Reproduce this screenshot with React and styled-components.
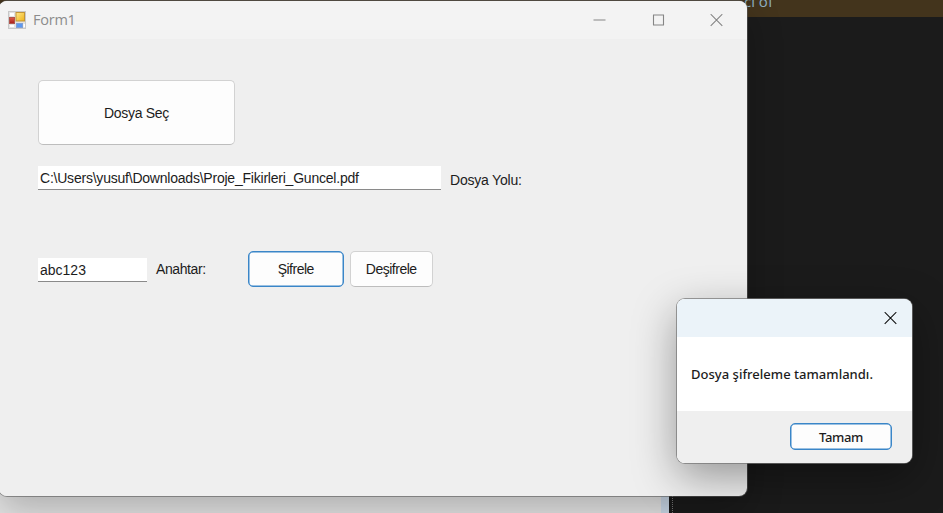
import React from "react";
import styled, { createGlobalStyle, css } from "styled-components";

const Global = createGlobalStyle`
  * { box-sizing: border-box; }
  body { margin: 0; overflow: hidden; background: #1b1b1b; }
`;

const Desktop = styled.main`
  position: relative;
  width: 943px;
  height: 513px;
  overflow: hidden;
  display: flex;
  flex-direction: column;
  justify-content: space-between;
  background: #1b1b1b;
  font-family: "Liberation Sans", Arial, sans-serif;
  color: #1c1c1c;
`;

const EditorLine = styled.div`
  height: 17px;
  padding-left: 744px;
  background: #43341c;
  color: #8fb0c0;
  font: 15px/17px "Open Sans", sans-serif;
  white-space: pre;
  span { display: block; margin-top: -7px; }
`;

const Backdrop = styled.div`
  display: flex;
  height: 30px;
`;

const Page = styled.div`
  width: 661px;
  background: #e4e4e4;
`;

const Scrollbar = styled.div`
  width: 8px;
  background: #cbd9e8;
`;

const Splitter = styled.div`
  margin-left: 3px;
  border-left: 1px dotted #777;
`;

const FormWindow = styled.section`
  position: absolute;
  left: -1px;
  top: 1px;
  width: 748px;
  height: 495px;
  display: flex;
  flex-direction: column;
  overflow: hidden;
  border-radius: 8px;
  background: #efefef;
`;

const FormShadow = styled.div`
  position: absolute;
  left: -1px;
  top: 1px;
  width: 748px;
  height: 495px;
  border-radius: 8px;
  box-shadow: 0 0 0 1px rgba(90, 90, 90, 0.6), 0 14px 36px rgba(0, 0, 0, 0.24);
`;

const TitleBar = styled.header`
  display: flex;
  align-items: center;
  height: 38px;
  padding: 0 24px 0 9px;
  background: #f3f3f3;
`;

const Title = styled.h1`
  flex: 1;
  margin: 0 0 0 7px;
  font: 400 14.5px/20px "Open Sans", sans-serif;
  letter-spacing: -0.25px;
  color: #8c8c8c;
`;

const Controls = styled.div`
  display: flex;
  gap: 45.5px;
  svg { display: block; }
`;

const Body = styled.div`
  display: flex;
  flex-direction: column;
  align-items: flex-start;
  padding: 41px 0 0 39px;
`;

const Row = styled.div`
  display: flex;
  align-items: flex-start;
  margin-top: ${(p) => p.$top}px;
`;

const Button = styled.button`
  width: ${(p) => p.$w}px;
  height: ${(p) => p.$h}px;
  margin: 0 0 0 ${(p) => p.$left || 0}px;
  padding: 0;
  border: 1px solid #d2d2d2;
  border-bottom-color: #bdbdbd;
  border-radius: 5px;
  background: #fdfdfd;
  font: 14px/18px "Liberation Sans", Arial, sans-serif;
  letter-spacing: ${(p) => p.$track || 0}px;
  color: #1c1c1c;
  ${(p) =>
    p.$focused &&
    css`
      border: 1px solid #3a86c8;
      box-shadow: inset 0 0 0 0.5px #3a86c8;
    `}
  ${(p) =>
    p.$dialog &&
    css`
      font-family: "Noto Sans", sans-serif;
      font-size: 13px;
      font-weight: 500;
    `}
`;

const Field = styled.input`
  width: ${(p) => p.$w}px;
  height: 24px;
  padding: 0 2px;
  border: 0;
  border-bottom: 1px solid #8a8a8a;
  outline: 0;
  background: #fff;
  font: 14px/20px "Liberation Sans", Arial, sans-serif;
  letter-spacing: ${(p) => p.$track}px;
  color: #1c1c1c;
`;

const Label = styled.label`
  margin: ${(p) => p.$top}px 0 0 9px;
  font-size: 14px;
  line-height: 18px;
  letter-spacing: ${(p) => p.$track}px;
`;

const Dialog = styled.section`
  position: absolute;
  left: 677px;
  top: 299px;
  width: 235px;
  height: 164px;
  display: flex;
  flex-direction: column;
  overflow: hidden;
  border-radius: 8px;
  background: #fff;
`;

const DialogShadow = styled.div`
  position: absolute;
  left: 677px;
  top: 299px;
  width: 235px;
  height: 164px;
  border-radius: 8px;
  box-shadow: 0 0 0 1px rgba(115, 115, 115, 0.7), 0 14px 44px rgba(0, 0, 0, 0.38);
`;

const DialogBar = styled.header`
  display: flex;
  justify-content: flex-end;
  height: 38px;
  padding: 13px 15px 0;
  background: #ebf3f9;
`;

const Message = styled.p`
  flex: 1;
  margin: 0;
  padding: 28px 0 0 14px;
  font: 500 13px/18px "Noto Sans", sans-serif;
  letter-spacing: 0.02px;
  white-space: nowrap;
`;

const DialogFooter = styled.footer`
  display: flex;
  justify-content: flex-end;
  height: 52px;
  padding: 12px 20px 0;
  background: #efefef;
`;

const FormIcon = () => (
  <svg width="18" height="18" viewBox="0 0 18 18">
    <defs>
      <linearGradient id="gold" x2="1" y2="1">
        <stop stopColor="#ffe98a" />
        <stop offset="1" stopColor="#eeb218" />
      </linearGradient>
      <linearGradient id="red" x2="0" y2="1">
        <stop stopColor="#e25c4a" />
        <stop offset="1" stopColor="#a51d18" />
      </linearGradient>
    </defs>
    <rect x=".5" y=".5" width="17" height="17" fill="#e2e2e2" stroke="#c8c8c8" />
    <path d="M2 2h4v3H2zM2 14h4v2H2zM15.500 13h1.500v3h-1.500z" fill="#fff" />
    <rect x="8" y="1.500" width="8.500" height="8.500" fill="url(#gold)" stroke="#c39535" />
    <rect x="1.500" y="6.500" width="5" height="6" fill="url(#red)" stroke="#b0564e" />
    <rect x="8.500" y="12.500" width="6" height="4" fill="#5c98f0" stroke="#7f9fd6" />
  </svg>
);

const Glyph = ({ d, color = "#858585" }) => (
  <svg width="13" height="13" viewBox="0 0 13 13" fill="none" stroke={color} strokeWidth="1.1">
    <path d={d} />
  </svg>
);

const CROSS = "M.7.2l11.6 11.6M12.3.2L.7 11.8";

export default function App() {
  return (
    <>
      <Global />
      <Desktop>
        <EditorLine>
          <span>ci of</span>
        </EditorLine>
        <Backdrop>
          <Page />
          <Scrollbar />
          <Splitter />
        </Backdrop>
        <FormShadow />
        <FormWindow>
          <TitleBar>
            <FormIcon />
            <Title>Form1</Title>
            <Controls>
              <Glyph d="M.5 6h12" />
              <Glyph d="M1.500 1h10v10h-10z" />
              <Glyph d={CROSS} />
            </Controls>
          </TitleBar>
          <Body>
            <Button $w={197} $h={65} $track={-0.3}>Dosya Seç</Button>
            <Row $top={21}>
              <Field $w={403} $track={-0.22} defaultValue={"C:\\Users\\yusuf\\Downloads\\Proje_Fikirleri_Guncel.pdf"} />
              <Label $top={5} $track={-0.2}>Dosya Yolu:</Label>
            </Row>
            <Row $top={61}>
              <Row $top={7}>
                <Field $w={109} $track={0} defaultValue="abc123" />
                <Label $top={2} $track={-0.4}>Anahtar:</Label>
              </Row>
              <Button $w={96} $h={36} $left={42} $track={-0.5} $focused>Şifrele</Button>
              <Button $w={83} $h={36} $left={6} $track={-0.5}>Deşifrele</Button>
            </Row>
          </Body>
        </FormWindow>
        <DialogShadow />
        <Dialog>
          <DialogBar>
            <Glyph d={CROSS} color="#111" />
          </DialogBar>
          <Message>Dosya şifreleme tamamlandı.</Message>
          <DialogFooter>
            <Button $w={102} $h={27} $track={-0.4} $focused $dialog>Tamam</Button>
          </DialogFooter>
        </Dialog>
      </Desktop>
    </>
  );
}
